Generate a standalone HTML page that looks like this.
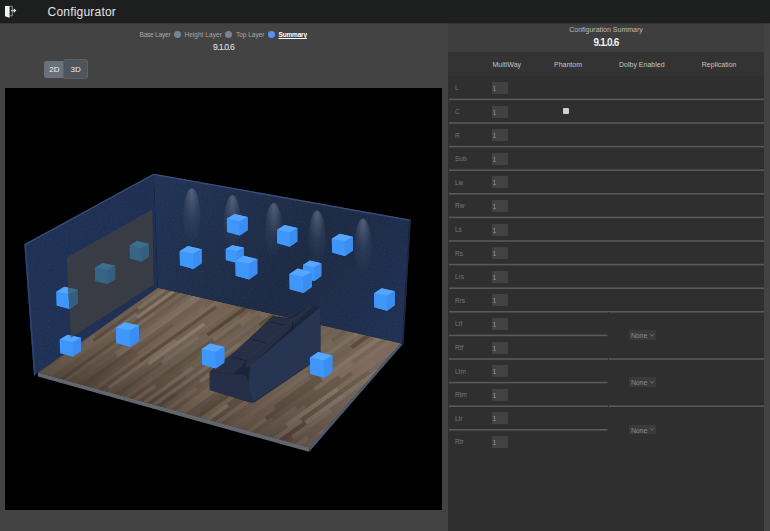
<!DOCTYPE html>
<html><head><meta charset="utf-8">
<style>
html,body{margin:0;padding:0;}
body{width:770px;height:531px;position:relative;overflow:hidden;background:#434343;font-family:"Liberation Sans",sans-serif;}
.abs{position:absolute;}
#hdr{position:absolute;left:0;top:0;width:770px;height:23px;background:#1d1f1f;box-shadow:0 0.5px 1.5px rgba(0,0,0,0.45);z-index:2;}
#title{position:absolute;z-index:3;left:47.6px;top:3.5px;font-size:12px;letter-spacing:0.2px;color:#e4e4e4;line-height:16px;}
#tabs{position:absolute;left:0;top:30.2px;width:447px;text-align:center;font-size:6.5px;letter-spacing:-0.2px;color:#a8a8a8;line-height:10px;white-space:nowrap;}
.dot{position:absolute;top:31.2px;width:6.8px;height:6.8px;border-radius:50%;background:#788390;}
.tb{position:absolute;top:30.2px;font-size:6.5px;color:#a8a8a8;line-height:10px;white-space:nowrap;}
#ver{position:absolute;left:0;top:42px;width:447px;text-align:center;font-size:8.7px;letter-spacing:-0.8px;color:#e8e8e8;line-height:10px;}
#b2d{position:absolute;left:43.7px;top:60.7px;width:21px;height:17.3px;background:#6b7178;border-radius:2px;}
#b3d{position:absolute;left:63.2px;top:59.2px;width:22.5px;height:18.2px;background:#4f555c;border:1px solid #5d6167;border-radius:3px;}
.bt{position:absolute;color:#eee;font-size:8px;line-height:8px;}
#cv{position:absolute;left:5px;top:88px;width:437px;height:422px;background:#000;}
#rp{position:absolute;left:448px;top:23px;width:316px;height:508px;background:#3e3e3e;}
#tbl{position:absolute;left:448px;top:52.3px;width:316px;height:479px;background:#2f2f2f;}
#cs{position:absolute;left:448px;top:24.6px;width:316px;text-align:center;font-size:7px;color:#bbb;line-height:10px;}
#csv{position:absolute;left:448px;top:36.5px;width:316px;text-align:center;font-size:10px;font-weight:bold;letter-spacing:-0.8px;color:#f0f0f0;line-height:12px;}
.th{position:absolute;top:60px;font-size:7px;color:#c4c4c4;line-height:10px;white-space:nowrap;}
.rl{position:absolute;left:455px;font-size:6.5px;color:#777;line-height:10px;}
.inp{position:absolute;left:492px;width:16px;height:12px;background:#424242;font-size:6.5px;color:#999;line-height:13.4px;text-indent:0.5px;}
.ln{position:absolute;left:449px;width:315px;height:1.3px;background:#575757;}
.sel{position:absolute;left:628.7px;width:27.4px;height:9.7px;background:#3a3a3a;font-size:7px;color:#8a8a8a;line-height:12px;text-indent:2.2px;letter-spacing:-0.1px;}
.sel svg{position:absolute;left:21.6px;top:3.9px;}
</style></head><body>
<div id="hdr"></div>
<svg class="abs" style="left:4px;top:5px;z-index:3" width="14" height="14" viewBox="0 0 14 14">
<polygon points="1,1 5.6,1 5.6,12.7 1,11.2" fill="#f2f2f2"/>
<polyline points="5.6,1.2 8.3,1.2 8.3,10.8 5.6,10.8" fill="none" stroke="#9a9a9a" stroke-width="0.9"/>
<rect x="7" y="4.9" width="3" height="1.4" fill="#bdbdbd"/>
<polygon points="9.8,3.4 12.4,5.6 9.8,7.9" fill="#f2f2f2"/>
</svg>
<div id="title">Configurator</div>
<div class="tb" style="left:139.5px;letter-spacing:-0.2px">Base Layer</div><span class="dot" style="left:174.3px"></span><div class="tb" style="left:184.4px;letter-spacing:0.05px">Height Layer</div><span class="dot" style="left:225.4px"></span><div class="tb" style="left:235.9px;letter-spacing:0px">Top Layer</div><span class="dot" style="left:268.2px;background:#5b8ff0"></span><div class="tb" style="left:278.6px;color:#fff;font-weight:bold;text-decoration:underline;letter-spacing:-0.2px">Summary</div>
<div id="ver">9.1.0.6</div>
<div id="b2d"></div>
<div id="b3d"></div>
<div class="bt" style="left:49.3px;top:66.1px">2D</div>
<div class="bt" style="left:70.5px;top:66.1px">3D</div>
<div id="cv"><svg width="437" height="422" viewBox="5 88 437 422" style="display:block">
<defs>
<linearGradient id="lw" gradientUnits="userSpaceOnUse" x1="25" y1="250" x2="155" y2="250"><stop offset="0" stop-color="#1f3155"/><stop offset="1" stop-color="#1e2f52"/></linearGradient>
<linearGradient id="bw" gradientUnits="userSpaceOnUse" x1="155" y1="175" x2="405" y2="345"><stop offset="0" stop-color="#213456"/><stop offset="0.55" stop-color="#1d2a44"/><stop offset="1" stop-color="#203155"/></linearGradient>
<radialGradient id="spot" cx="0.5" cy="0.22" r="0.8" fx="0.5" fy="0.06"><stop offset="0" stop-color="#a4aec0" stop-opacity="0.38"/><stop offset="0.55" stop-color="#8a96aa" stop-opacity="0.1"/><stop offset="1" stop-color="#8a96aa" stop-opacity="0"/></radialGradient>
<filter id="nz" x="0" y="0" width="100%" height="100%"><feTurbulence type="fractalNoise" baseFrequency="0.7" numOctaves="2" seed="3"/><feColorMatrix type="matrix" values="0 0 0 0 0.6  0 0 0 0 0.7  0 0 0 0 0.9  1 0 0 0 -0.45"/></filter>
<clipPath id="wc"><polygon points="24.4,244.4 153.8,173.7 410.8,219.8 403.4,344.6 400.5,343.2 157.6,287.7 37.9,372.6 34,375.7"/></clipPath>
<filter id="blr" x="-5%" y="-5%" width="110%" height="110%"><feGaussianBlur stdDeviation="0.6"/></filter>
<clipPath id="fc"><polygon points="157.6,287.7 400.5,343.2 309.5,447.5 37.9,372.6"/></clipPath>
<linearGradient id="flg" gradientUnits="userSpaceOnUse" x1="60" y1="330" x2="370" y2="360"><stop offset="0" stop-color="#000" stop-opacity="0.12"/><stop offset="0.5" stop-color="#000" stop-opacity="0"/><stop offset="1" stop-color="#fff" stop-opacity="0.08"/></linearGradient>
<linearGradient id="flg2" gradientUnits="userSpaceOnUse" x1="230" y1="300" x2="190" y2="430"><stop offset="0" stop-color="#fff" stop-opacity="0.04"/><stop offset="1" stop-color="#000" stop-opacity="0.2"/></linearGradient>
</defs>
<rect x="5" y="88" width="437" height="422" fill="#000"/>
<polygon points="37.9,372.6 309.5,447.5 308.8,451.8 37.9,376.6" fill="#62666e"/>
<polygon points="309.5,447.5 400.5,343.2 402.5,344.5 309.0,452.0" fill="#4a5a72"/>
<polygon points="157.6,287.7 400.5,343.2 309.5,447.5 37.9,372.6" fill="#6a5b4f"/>
<g clip-path="url(#fc)"><g filter="url(#blr)"><g transform="translate(37.9,372.6) rotate(-35.47)"><rect x="-33" y="-5.0" width="80" height="3.5" fill="rgb(123, 106, 87)"/><rect x="46" y="-5.0" width="76" height="3.5" fill="rgb(107, 90, 70)"/><rect x="122" y="-5.0" width="62" height="3.5" fill="rgb(130, 109, 98)"/><rect x="183" y="-5.0" width="108" height="3.5" fill="rgb(124, 106, 87)"/><rect x="291" y="-5.0" width="42" height="3.5" fill="rgb(106, 88, 72)"/><rect x="-32" y="-1.8" width="71" height="3.5" fill="rgb(113, 93, 79)"/><rect x="39" y="-1.8" width="75" height="3.5" fill="rgb(104, 90, 75)"/><rect x="114" y="-1.8" width="99" height="3.5" fill="rgb(102, 82, 66)"/><rect x="212" y="-1.8" width="61" height="3.5" fill="rgb(128, 114, 94)"/><rect x="273" y="-1.8" width="108" height="3.5" fill="rgb(122, 99, 85)"/><rect x="-5" y="1.4" width="73" height="3.5" fill="rgb(120, 106, 91)"/><rect x="68" y="1.4" width="59" height="3.5" fill="rgb(108, 91, 80)"/><rect x="126" y="1.4" width="94" height="3.5" fill="rgb(115, 97, 86)"/><rect x="219" y="1.4" width="53" height="3.5" fill="rgb(117, 99, 82)"/><rect x="272" y="1.4" width="92" height="3.5" fill="rgb(120, 104, 87)"/><rect x="-44" y="4.6" width="108" height="3.5" fill="rgb(125, 104, 92)"/><rect x="64" y="4.6" width="55" height="3.5" fill="rgb(95, 73, 64)"/><rect x="119" y="4.6" width="55" height="3.5" fill="rgb(123, 109, 90)"/><rect x="174" y="4.6" width="61" height="3.5" fill="rgb(116, 96, 83)"/><rect x="235" y="4.6" width="67" height="3.5" fill="rgb(113, 99, 80)"/><rect x="301" y="4.6" width="81" height="3.5" fill="rgb(114, 101, 85)"/><rect x="-45" y="7.8" width="54" height="3.5" fill="rgb(107, 91, 71)"/><rect x="8" y="7.8" width="107" height="3.5" fill="rgb(122, 103, 86)"/><rect x="115" y="7.8" width="108" height="3.5" fill="rgb(99, 84, 67)"/><rect x="222" y="7.8" width="98" height="3.5" fill="rgb(102, 87, 68)"/><rect x="320" y="7.8" width="56" height="3.5" fill="rgb(106, 90, 74)"/><rect x="-43" y="11.0" width="105" height="3.6" fill="rgb(110, 94, 76)"/><rect x="61" y="11.0" width="53" height="3.6" fill="rgb(112, 96, 78)"/><rect x="113" y="11.0" width="66" height="3.6" fill="rgb(136, 119, 102)"/><rect x="179" y="11.0" width="50" height="3.6" fill="rgb(88, 70, 61)"/><rect x="229" y="11.0" width="90" height="3.6" fill="rgb(114, 95, 81)"/><rect x="318" y="11.0" width="63" height="3.6" fill="rgb(114, 90, 78)"/><rect x="-16" y="14.3" width="104" height="3.6" fill="rgb(111, 94, 76)"/><rect x="87" y="14.3" width="88" height="3.6" fill="rgb(96, 77, 60)"/><rect x="175" y="14.3" width="96" height="3.6" fill="rgb(121, 102, 88)"/><rect x="271" y="14.3" width="83" height="3.6" fill="rgb(97, 83, 70)"/><rect x="-7" y="17.6" width="91" height="3.6" fill="rgb(97, 78, 66)"/><rect x="84" y="17.6" width="46" height="3.6" fill="rgb(124, 102, 90)"/><rect x="130" y="17.6" width="74" height="3.6" fill="rgb(113, 96, 82)"/><rect x="203" y="17.6" width="58" height="3.6" fill="rgb(125, 110, 95)"/><rect x="261" y="17.6" width="55" height="3.6" fill="rgb(124, 105, 91)"/><rect x="315" y="17.6" width="63" height="3.6" fill="rgb(133, 113, 98)"/><rect x="-12" y="20.9" width="104" height="3.6" fill="rgb(119, 100, 83)"/><rect x="92" y="20.9" width="75" height="3.6" fill="rgb(105, 87, 71)"/><rect x="167" y="20.9" width="107" height="3.6" fill="rgb(109, 90, 75)"/><rect x="274" y="20.9" width="69" height="3.6" fill="rgb(118, 100, 83)"/><rect x="-10" y="24.3" width="109" height="3.7" fill="rgb(104, 91, 71)"/><rect x="99" y="24.3" width="90" height="3.7" fill="rgb(112, 93, 80)"/><rect x="189" y="24.3" width="42" height="3.7" fill="rgb(116, 103, 84)"/><rect x="230" y="24.3" width="50" height="3.7" fill="rgb(117, 103, 86)"/><rect x="280" y="24.3" width="85" height="3.7" fill="rgb(102, 82, 65)"/><rect x="-31" y="27.6" width="53" height="3.7" fill="rgb(91, 75, 62)"/><rect x="21" y="27.6" width="53" height="3.7" fill="rgb(110, 91, 77)"/><rect x="74" y="27.6" width="93" height="3.7" fill="rgb(120, 105, 90)"/><rect x="166" y="27.6" width="47" height="3.7" fill="rgb(125, 109, 94)"/><rect x="213" y="27.6" width="104" height="3.7" fill="rgb(102, 85, 72)"/><rect x="316" y="27.6" width="96" height="3.7" fill="rgb(123, 103, 90)"/><rect x="-11" y="31.0" width="85" height="3.7" fill="rgb(107, 86, 75)"/><rect x="74" y="31.0" width="109" height="3.7" fill="rgb(126, 106, 93)"/><rect x="183" y="31.0" width="100" height="3.7" fill="rgb(107, 88, 75)"/><rect x="283" y="31.0" width="79" height="3.7" fill="rgb(109, 96, 76)"/><rect x="-12" y="34.4" width="53" height="3.7" fill="rgb(96, 81, 62)"/><rect x="40" y="34.4" width="51" height="3.7" fill="rgb(94, 75, 62)"/><rect x="91" y="34.4" width="75" height="3.7" fill="rgb(111, 88, 74)"/><rect x="165" y="34.4" width="77" height="3.7" fill="rgb(107, 88, 75)"/><rect x="242" y="34.4" width="80" height="3.7" fill="rgb(127, 110, 96)"/><rect x="321" y="34.4" width="104" height="3.7" fill="rgb(119, 98, 83)"/><rect x="-48" y="37.8" width="78" height="3.7" fill="rgb(131, 115, 95)"/><rect x="30" y="37.8" width="108" height="3.7" fill="rgb(101, 81, 66)"/><rect x="137" y="37.8" width="89" height="3.7" fill="rgb(106, 91, 75)"/><rect x="226" y="37.8" width="107" height="3.7" fill="rgb(118, 98, 84)"/><rect x="-11" y="41.2" width="104" height="3.8" fill="rgb(106, 87, 71)"/><rect x="92" y="41.2" width="84" height="3.8" fill="rgb(117, 95, 80)"/><rect x="175" y="41.2" width="56" height="3.8" fill="rgb(108, 88, 73)"/><rect x="231" y="41.2" width="84" height="3.8" fill="rgb(122, 107, 89)"/><rect x="315" y="41.2" width="54" height="3.8" fill="rgb(121, 103, 87)"/><rect x="-35" y="44.7" width="78" height="3.8" fill="rgb(115, 97, 81)"/><rect x="42" y="44.7" width="100" height="3.8" fill="rgb(117, 101, 81)"/><rect x="141" y="44.7" width="92" height="3.8" fill="rgb(118, 100, 88)"/><rect x="233" y="44.7" width="56" height="3.8" fill="rgb(90, 71, 53)"/><rect x="289" y="44.7" width="57" height="3.8" fill="rgb(106, 93, 75)"/><rect x="-13" y="48.2" width="49" height="3.8" fill="rgb(100, 84, 65)"/><rect x="36" y="48.2" width="55" height="3.8" fill="rgb(102, 79, 67)"/><rect x="90" y="48.2" width="94" height="3.8" fill="rgb(87, 70, 53)"/><rect x="183" y="48.2" width="45" height="3.8" fill="rgb(112, 94, 79)"/><rect x="228" y="48.2" width="51" height="3.8" fill="rgb(110, 92, 80)"/><rect x="279" y="48.2" width="110" height="3.8" fill="rgb(112, 99, 81)"/><rect x="-14" y="51.7" width="63" height="3.8" fill="rgb(107, 89, 74)"/><rect x="49" y="51.7" width="83" height="3.8" fill="rgb(129, 108, 93)"/><rect x="131" y="51.7" width="92" height="3.8" fill="rgb(110, 91, 76)"/><rect x="223" y="51.7" width="76" height="3.8" fill="rgb(135, 117, 101)"/><rect x="298" y="51.7" width="85" height="3.8" fill="rgb(111, 95, 79)"/><rect x="-1" y="55.2" width="97" height="3.9" fill="rgb(110, 92, 77)"/><rect x="95" y="55.2" width="69" height="3.9" fill="rgb(136, 119, 101)"/><rect x="164" y="55.2" width="94" height="3.9" fill="rgb(112, 90, 76)"/><rect x="257" y="55.2" width="73" height="3.9" fill="rgb(95, 79, 66)"/><rect x="-23" y="58.8" width="57" height="3.9" fill="rgb(124, 108, 92)"/><rect x="34" y="58.8" width="78" height="3.9" fill="rgb(103, 89, 71)"/><rect x="111" y="58.8" width="90" height="3.9" fill="rgb(109, 94, 80)"/><rect x="200" y="58.8" width="58" height="3.9" fill="rgb(77, 57, 44)"/><rect x="258" y="58.8" width="67" height="3.9" fill="rgb(119, 99, 83)"/><rect x="324" y="58.8" width="108" height="3.9" fill="rgb(115, 99, 82)"/><rect x="-11" y="62.3" width="46" height="3.9" fill="rgb(91, 78, 59)"/><rect x="34" y="62.3" width="74" height="3.9" fill="rgb(96, 80, 66)"/><rect x="107" y="62.3" width="45" height="3.9" fill="rgb(120, 103, 86)"/><rect x="151" y="62.3" width="61" height="3.9" fill="rgb(106, 88, 71)"/><rect x="211" y="62.3" width="91" height="3.9" fill="rgb(107, 88, 73)"/><rect x="301" y="62.3" width="93" height="3.9" fill="rgb(110, 95, 79)"/><rect x="-57" y="65.9" width="110" height="3.9" fill="rgb(116, 95, 80)"/><rect x="52" y="65.9" width="109" height="3.9" fill="rgb(106, 90, 77)"/><rect x="160" y="65.9" width="91" height="3.9" fill="rgb(80, 60, 44)"/><rect x="251" y="65.9" width="84" height="3.9" fill="rgb(115, 96, 79)"/><rect x="-28" y="69.6" width="49" height="3.9" fill="rgb(93, 74, 61)"/><rect x="20" y="69.6" width="70" height="3.9" fill="rgb(116, 97, 84)"/><rect x="90" y="69.6" width="107" height="3.9" fill="rgb(106, 92, 77)"/><rect x="196" y="69.6" width="84" height="3.9" fill="rgb(100, 81, 69)"/><rect x="280" y="69.6" width="80" height="3.9" fill="rgb(97, 75, 61)"/><rect x="-1" y="73.2" width="105" height="4.0" fill="rgb(102, 79, 65)"/><rect x="103" y="73.2" width="59" height="4.0" fill="rgb(92, 77, 59)"/><rect x="162" y="73.2" width="47" height="4.0" fill="rgb(117, 98, 83)"/><rect x="208" y="73.2" width="67" height="4.0" fill="rgb(100, 84, 70)"/><rect x="274" y="73.2" width="46" height="4.0" fill="rgb(107, 94, 77)"/><rect x="319" y="73.2" width="94" height="4.0" fill="rgb(110, 95, 77)"/><rect x="-21" y="76.9" width="110" height="4.0" fill="rgb(119, 103, 88)"/><rect x="88" y="76.9" width="105" height="4.0" fill="rgb(96, 83, 64)"/><rect x="193" y="76.9" width="46" height="4.0" fill="rgb(114, 95, 81)"/><rect x="239" y="76.9" width="61" height="4.0" fill="rgb(108, 92, 74)"/><rect x="300" y="76.9" width="62" height="4.0" fill="rgb(106, 87, 70)"/><rect x="-51" y="80.6" width="66" height="4.0" fill="rgb(105, 90, 74)"/><rect x="14" y="80.6" width="105" height="4.0" fill="rgb(100, 82, 65)"/><rect x="118" y="80.6" width="97" height="4.0" fill="rgb(105, 90, 74)"/><rect x="214" y="80.6" width="58" height="4.0" fill="rgb(117, 99, 83)"/><rect x="272" y="80.6" width="68" height="4.0" fill="rgb(103, 87, 70)"/><rect x="-10" y="84.3" width="80" height="4.0" fill="rgb(111, 97, 82)"/><rect x="70" y="84.3" width="60" height="4.0" fill="rgb(122, 105, 91)"/><rect x="129" y="84.3" width="86" height="4.0" fill="rgb(112, 90, 77)"/><rect x="215" y="84.3" width="96" height="4.0" fill="rgb(114, 97, 77)"/><rect x="310" y="84.3" width="85" height="4.0" fill="rgb(108, 94, 78)"/><rect x="-45" y="88.0" width="56" height="4.1" fill="rgb(111, 91, 75)"/><rect x="10" y="88.0" width="108" height="4.1" fill="rgb(96, 76, 62)"/><rect x="118" y="88.0" width="91" height="4.1" fill="rgb(101, 86, 70)"/><rect x="208" y="88.0" width="100" height="4.1" fill="rgb(86, 68, 54)"/><rect x="308" y="88.0" width="108" height="4.1" fill="rgb(101, 83, 66)"/><rect x="-35" y="91.8" width="51" height="4.1" fill="rgb(99, 82, 64)"/><rect x="15" y="91.8" width="52" height="4.1" fill="rgb(110, 96, 75)"/><rect x="67" y="91.8" width="62" height="4.1" fill="rgb(117, 103, 88)"/><rect x="129" y="91.8" width="53" height="4.1" fill="rgb(120, 104, 83)"/><rect x="181" y="91.8" width="48" height="4.1" fill="rgb(111, 93, 78)"/><rect x="229" y="91.8" width="91" height="4.1" fill="rgb(100, 82, 67)"/><rect x="319" y="91.8" width="94" height="4.1" fill="rgb(102, 86, 72)"/><rect x="-31" y="95.6" width="59" height="4.1" fill="rgb(126, 110, 96)"/><rect x="27" y="95.6" width="74" height="4.1" fill="rgb(90, 71, 62)"/><rect x="101" y="95.6" width="97" height="4.1" fill="rgb(98, 78, 68)"/><rect x="197" y="95.6" width="87" height="4.1" fill="rgb(115, 96, 83)"/><rect x="283" y="95.6" width="67" height="4.1" fill="rgb(114, 93, 78)"/><rect x="-41" y="99.4" width="59" height="4.1" fill="rgb(93, 72, 59)"/><rect x="17" y="99.4" width="110" height="4.1" fill="rgb(104, 90, 70)"/><rect x="127" y="99.4" width="98" height="4.1" fill="rgb(124, 106, 85)"/><rect x="224" y="99.4" width="59" height="4.1" fill="rgb(107, 89, 76)"/><rect x="283" y="99.4" width="82" height="4.1" fill="rgb(105, 84, 72)"/><rect x="-35" y="103.2" width="105" height="4.2" fill="rgb(123, 108, 92)"/><rect x="69" y="103.2" width="52" height="4.2" fill="rgb(121, 100, 84)"/><rect x="120" y="103.2" width="46" height="4.2" fill="rgb(105, 84, 71)"/><rect x="166" y="103.2" width="48" height="4.2" fill="rgb(119, 102, 89)"/><rect x="213" y="103.2" width="99" height="4.2" fill="rgb(106, 90, 72)"/><rect x="311" y="103.2" width="80" height="4.2" fill="rgb(106, 85, 76)"/><rect x="-12" y="107.0" width="55" height="4.2" fill="rgb(100, 83, 66)"/><rect x="42" y="107.0" width="64" height="4.2" fill="rgb(101, 84, 67)"/><rect x="106" y="107.0" width="54" height="4.2" fill="rgb(109, 89, 75)"/><rect x="160" y="107.0" width="64" height="4.2" fill="rgb(99, 77, 63)"/><rect x="223" y="107.0" width="47" height="4.2" fill="rgb(98, 81, 69)"/><rect x="270" y="107.0" width="82" height="4.2" fill="rgb(89, 72, 57)"/><rect x="-53" y="110.9" width="69" height="4.2" fill="rgb(129, 113, 97)"/><rect x="16" y="110.9" width="94" height="4.2" fill="rgb(120, 100, 84)"/><rect x="110" y="110.9" width="69" height="4.2" fill="rgb(120, 104, 87)"/><rect x="178" y="110.9" width="87" height="4.2" fill="rgb(109, 88, 74)"/><rect x="265" y="110.9" width="64" height="4.2" fill="rgb(103, 86, 73)"/><rect x="329" y="110.9" width="98" height="4.2" fill="rgb(104, 83, 72)"/><rect x="-6" y="114.8" width="79" height="4.2" fill="rgb(97, 82, 69)"/><rect x="73" y="114.8" width="77" height="4.2" fill="rgb(119, 102, 82)"/><rect x="149" y="114.8" width="107" height="4.2" fill="rgb(99, 82, 69)"/><rect x="255" y="114.8" width="89" height="4.2" fill="rgb(101, 86, 68)"/><rect x="-32" y="118.8" width="49" height="4.3" fill="rgb(115, 95, 80)"/><rect x="16" y="118.8" width="80" height="4.3" fill="rgb(105, 90, 76)"/><rect x="96" y="118.8" width="98" height="4.3" fill="rgb(104, 83, 72)"/><rect x="193" y="118.8" width="57" height="4.3" fill="rgb(104, 88, 69)"/><rect x="250" y="118.8" width="79" height="4.3" fill="rgb(108, 95, 79)"/><rect x="328" y="118.8" width="87" height="4.3" fill="rgb(107, 91, 77)"/><rect x="-37" y="122.7" width="82" height="4.3" fill="rgb(106, 89, 72)"/><rect x="44" y="122.7" width="68" height="4.3" fill="rgb(105, 85, 72)"/><rect x="111" y="122.7" width="59" height="4.3" fill="rgb(99, 77, 66)"/><rect x="170" y="122.7" width="51" height="4.3" fill="rgb(105, 85, 70)"/><rect x="220" y="122.7" width="69" height="4.3" fill="rgb(96, 78, 62)"/><rect x="289" y="122.7" width="110" height="4.3" fill="rgb(97, 79, 62)"/><rect x="-34" y="126.7" width="80" height="4.3" fill="rgb(118, 100, 87)"/><rect x="46" y="126.7" width="63" height="4.3" fill="rgb(96, 82, 69)"/><rect x="108" y="126.7" width="92" height="4.3" fill="rgb(90, 74, 56)"/><rect x="199" y="126.7" width="49" height="4.3" fill="rgb(96, 78, 63)"/><rect x="248" y="126.7" width="44" height="4.3" fill="rgb(100, 83, 68)"/><rect x="292" y="126.7" width="57" height="4.3" fill="rgb(91, 78, 64)"/><rect x="-20" y="130.7" width="101" height="4.3" fill="rgb(87, 72, 57)"/><rect x="81" y="130.7" width="104" height="4.3" fill="rgb(114, 100, 81)"/><rect x="184" y="130.7" width="78" height="4.3" fill="rgb(105, 88, 73)"/><rect x="261" y="130.7" width="45" height="4.3" fill="rgb(109, 90, 73)"/><rect x="306" y="130.7" width="65" height="4.3" fill="rgb(101, 88, 69)"/><rect x="-30" y="134.7" width="106" height="4.4" fill="rgb(107, 86, 70)"/><rect x="75" y="134.7" width="61" height="4.4" fill="rgb(126, 112, 93)"/><rect x="136" y="134.7" width="74" height="4.4" fill="rgb(93, 79, 65)"/><rect x="209" y="134.7" width="55" height="4.4" fill="rgb(104, 81, 66)"/><rect x="263" y="134.7" width="91" height="4.4" fill="rgb(100, 85, 70)"/><rect x="-17" y="138.8" width="50" height="4.4" fill="rgb(97, 77, 63)"/><rect x="32" y="138.8" width="62" height="4.4" fill="rgb(83, 61, 47)"/><rect x="94" y="138.8" width="57" height="4.4" fill="rgb(95, 79, 66)"/><rect x="150" y="138.8" width="82" height="4.4" fill="rgb(88, 70, 59)"/><rect x="232" y="138.8" width="87" height="4.4" fill="rgb(101, 88, 70)"/><rect x="318" y="138.8" width="77" height="4.4" fill="rgb(122, 102, 89)"/><rect x="-43" y="142.9" width="58" height="4.4" fill="rgb(106, 91, 73)"/><rect x="15" y="142.9" width="60" height="4.4" fill="rgb(102, 82, 71)"/><rect x="74" y="142.9" width="110" height="4.4" fill="rgb(120, 100, 87)"/><rect x="183" y="142.9" width="75" height="4.4" fill="rgb(107, 91, 76)"/><rect x="258" y="142.9" width="66" height="4.4" fill="rgb(95, 77, 65)"/><rect x="323" y="142.9" width="88" height="4.4" fill="rgb(90, 74, 55)"/><rect x="-13" y="147.0" width="52" height="4.4" fill="rgb(99, 83, 68)"/><rect x="38" y="147.0" width="96" height="4.4" fill="rgb(99, 83, 66)"/><rect x="134" y="147.0" width="81" height="4.4" fill="rgb(103, 86, 70)"/><rect x="214" y="147.0" width="102" height="4.4" fill="rgb(104, 86, 70)"/><rect x="315" y="147.0" width="75" height="4.4" fill="rgb(93, 78, 60)"/><rect x="-6" y="151.1" width="80" height="4.5" fill="rgb(111, 94, 76)"/><rect x="74" y="151.1" width="51" height="4.5" fill="rgb(103, 87, 72)"/><rect x="124" y="151.1" width="59" height="4.5" fill="rgb(109, 88, 78)"/><rect x="183" y="151.1" width="53" height="4.5" fill="rgb(107, 90, 74)"/><rect x="235" y="151.1" width="45" height="4.5" fill="rgb(112, 94, 77)"/><rect x="279" y="151.1" width="108" height="4.5" fill="rgb(120, 104, 83)"/><rect x="-33" y="155.3" width="93" height="4.5" fill="rgb(106, 90, 78)"/><rect x="59" y="155.3" width="50" height="4.5" fill="rgb(98, 77, 63)"/><rect x="109" y="155.3" width="110" height="4.5" fill="rgb(113, 95, 77)"/><rect x="219" y="155.3" width="58" height="4.5" fill="rgb(97, 82, 64)"/><rect x="277" y="155.3" width="64" height="4.5" fill="rgb(106, 86, 67)"/><rect x="-36" y="159.5" width="86" height="4.5" fill="rgb(116, 99, 82)"/><rect x="50" y="159.5" width="103" height="4.5" fill="rgb(109, 91, 78)"/><rect x="152" y="159.5" width="67" height="4.5" fill="rgb(106, 87, 74)"/><rect x="218" y="159.5" width="52" height="4.5" fill="rgb(96, 78, 65)"/><rect x="270" y="159.5" width="62" height="4.5" fill="rgb(73, 55, 38)"/><rect x="-37" y="163.7" width="46" height="4.5" fill="rgb(118, 98, 82)"/><rect x="8" y="163.7" width="42" height="4.5" fill="rgb(108, 94, 77)"/><rect x="49" y="163.7" width="59" height="4.5" fill="rgb(112, 93, 83)"/><rect x="108" y="163.7" width="66" height="4.5" fill="rgb(109, 86, 73)"/><rect x="173" y="163.7" width="67" height="4.5" fill="rgb(85, 71, 54)"/><rect x="240" y="163.7" width="94" height="4.5" fill="rgb(101, 82, 66)"/><rect x="-51" y="167.9" width="82" height="4.6" fill="rgb(102, 86, 71)"/><rect x="31" y="167.9" width="79" height="4.6" fill="rgb(115, 100, 84)"/><rect x="109" y="167.9" width="51" height="4.6" fill="rgb(117, 99, 86)"/><rect x="159" y="167.9" width="69" height="4.6" fill="rgb(86, 68, 55)"/><rect x="227" y="167.9" width="56" height="4.6" fill="rgb(117, 99, 87)"/><rect x="283" y="167.9" width="80" height="4.6" fill="rgb(115, 99, 85)"/><rect x="-47" y="172.2" width="89" height="4.6" fill="rgb(77, 60, 46)"/><rect x="41" y="172.2" width="57" height="4.6" fill="rgb(101, 83, 66)"/><rect x="98" y="172.2" width="67" height="4.6" fill="rgb(100, 83, 67)"/><rect x="164" y="172.2" width="52" height="4.6" fill="rgb(93, 77, 60)"/><rect x="216" y="172.2" width="47" height="4.6" fill="rgb(111, 94, 77)"/><rect x="262" y="172.2" width="81" height="4.6" fill="rgb(102, 80, 67)"/><rect x="-38" y="176.5" width="45" height="4.6" fill="rgb(91, 70, 59)"/><rect x="6" y="176.5" width="82" height="4.6" fill="rgb(94, 74, 61)"/><rect x="87" y="176.5" width="103" height="4.6" fill="rgb(107, 87, 75)"/><rect x="190" y="176.5" width="54" height="4.6" fill="rgb(92, 70, 57)"/><rect x="243" y="176.5" width="106" height="4.6" fill="rgb(109, 91, 75)"/><rect x="-35" y="180.8" width="70" height="4.7" fill="rgb(103, 82, 71)"/><rect x="34" y="180.8" width="43" height="4.7" fill="rgb(123, 108, 91)"/><rect x="76" y="180.8" width="66" height="4.7" fill="rgb(109, 91, 79)"/><rect x="142" y="180.8" width="57" height="4.7" fill="rgb(101, 86, 70)"/><rect x="198" y="180.8" width="57" height="4.7" fill="rgb(89, 71, 56)"/><rect x="255" y="180.8" width="99" height="4.7" fill="rgb(108, 86, 71)"/><rect x="-7" y="185.2" width="62" height="4.7" fill="rgb(102, 85, 70)"/><rect x="55" y="185.2" width="52" height="4.7" fill="rgb(88, 69, 55)"/><rect x="106" y="185.2" width="66" height="4.7" fill="rgb(100, 81, 66)"/><rect x="172" y="185.2" width="63" height="4.7" fill="rgb(121, 105, 87)"/><rect x="235" y="185.2" width="45" height="4.7" fill="rgb(110, 89, 76)"/><rect x="279" y="185.2" width="95" height="4.7" fill="rgb(106, 87, 76)"/><rect x="-8" y="189.5" width="44" height="4.7" fill="rgb(106, 85, 72)"/><rect x="36" y="189.5" width="58" height="4.7" fill="rgb(119, 99, 83)"/><rect x="94" y="189.5" width="94" height="4.7" fill="rgb(116, 98, 84)"/><rect x="187" y="189.5" width="84" height="4.7" fill="rgb(89, 70, 52)"/><rect x="270" y="189.5" width="67" height="4.7" fill="rgb(98, 79, 68)"/><rect x="-4" y="194.0" width="108" height="4.7" fill="rgb(95, 80, 64)"/><rect x="104" y="194.0" width="85" height="4.7" fill="rgb(86, 62, 52)"/><rect x="189" y="194.0" width="49" height="4.7" fill="rgb(117, 101, 88)"/><rect x="237" y="194.0" width="110" height="4.7" fill="rgb(109, 94, 78)"/><rect x="-38" y="198.4" width="62" height="4.8" fill="rgb(113, 95, 76)"/><rect x="24" y="198.4" width="68" height="4.8" fill="rgb(93, 71, 58)"/><rect x="91" y="198.4" width="79" height="4.8" fill="rgb(93, 71, 57)"/><rect x="170" y="198.4" width="48" height="4.8" fill="rgb(112, 92, 77)"/><rect x="217" y="198.4" width="42" height="4.8" fill="rgb(101, 80, 68)"/><rect x="259" y="198.4" width="60" height="4.8" fill="rgb(105, 86, 70)"/><rect x="318" y="198.4" width="45" height="4.8" fill="rgb(119, 98, 81)"/><rect x="-49" y="202.9" width="74" height="4.8" fill="rgb(113, 93, 78)"/><rect x="25" y="202.9" width="97" height="4.8" fill="rgb(103, 83, 71)"/><rect x="121" y="202.9" width="86" height="4.8" fill="rgb(100, 81, 67)"/><rect x="207" y="202.9" width="72" height="4.8" fill="rgb(99, 81, 63)"/><rect x="278" y="202.9" width="42" height="4.8" fill="rgb(104, 88, 75)"/><rect x="320" y="202.9" width="62" height="4.8" fill="rgb(109, 88, 74)"/><rect x="-2" y="207.3" width="41" height="4.8" fill="rgb(85, 66, 50)"/><rect x="38" y="207.3" width="97" height="4.8" fill="rgb(102, 84, 70)"/><rect x="135" y="207.3" width="48" height="4.8" fill="rgb(116, 95, 84)"/><rect x="182" y="207.3" width="42" height="4.8" fill="rgb(101, 80, 67)"/><rect x="223" y="207.3" width="66" height="4.8" fill="rgb(91, 75, 59)"/><rect x="289" y="207.3" width="60" height="4.8" fill="rgb(89, 67, 52)"/><rect x="-40" y="211.9" width="92" height="4.8" fill="rgb(108, 91, 73)"/><rect x="52" y="211.9" width="48" height="4.8" fill="rgb(119, 103, 87)"/><rect x="99" y="211.9" width="41" height="4.8" fill="rgb(91, 74, 62)"/><rect x="140" y="211.9" width="55" height="4.8" fill="rgb(106, 84, 72)"/><rect x="194" y="211.9" width="48" height="4.8" fill="rgb(118, 96, 81)"/><rect x="242" y="211.9" width="90" height="4.8" fill="rgb(101, 83, 71)"/><rect x="-3" y="216.4" width="63" height="4.9" fill="rgb(110, 87, 75)"/><rect x="59" y="216.4" width="67" height="4.9" fill="rgb(114, 93, 80)"/><rect x="126" y="216.4" width="103" height="4.9" fill="rgb(113, 96, 77)"/><rect x="228" y="216.4" width="99" height="4.9" fill="rgb(92, 72, 59)"/><rect x="327" y="216.4" width="70" height="4.9" fill="rgb(98, 79, 64)"/><rect x="-58" y="221.0" width="84" height="4.9" fill="rgb(108, 91, 76)"/><rect x="26" y="221.0" width="106" height="4.9" fill="rgb(113, 94, 76)"/><rect x="131" y="221.0" width="92" height="4.9" fill="rgb(116, 95, 82)"/><rect x="223" y="221.0" width="49" height="4.9" fill="rgb(114, 100, 84)"/><rect x="271" y="221.0" width="106" height="4.9" fill="rgb(104, 86, 69)"/></g></g></g>
<polygon points="157.6,287.7 400.5,343.2 309.5,447.5 37.9,372.6" fill="url(#flg)"/>
<polygon points="157.6,287.7 400.5,343.2 309.5,447.5 37.9,372.6" fill="url(#flg2)"/>
<polygon points="153.8,173.7 410.8,219.8 403.4,344.6 400.5,343.2 157.6,287.7" fill="url(#bw)"/>
<polyline points="153.8,174.3 410.8,220.4" stroke="#384e78" stroke-width="1.3" fill="none"/>
<polyline points="409.8,220.3 402.6,344.4" stroke="#1b2438" stroke-width="1.6" fill="none"/>
<polygon points="24.4,244.4 153.8,173.7 157.6,287.7 37.9,372.6 34.0,375.7" fill="url(#lw)"/>
<polyline points="24.4,244.9 153.8,174.3" stroke="#384e78" stroke-width="1.3" fill="none"/>
<polyline points="25.2,245.2 34.8,375.4" stroke="#2c4270" stroke-width="1.6" fill="none"/>
<g clip-path="url(#wc)" opacity="0.13"><rect x="20" y="170" width="395" height="210" filter="url(#nz)"/></g>
<ellipse cx="191.8" cy="216.2" rx="8.5" ry="28" fill="url(#spot)"/>
<ellipse cx="232.4" cy="223" rx="8.5" ry="28" fill="url(#spot)"/>
<ellipse cx="273.8" cy="230.9" rx="8.5" ry="28" fill="url(#spot)"/>
<ellipse cx="317.1" cy="238.5" rx="8.5" ry="28" fill="url(#spot)"/>
<ellipse cx="363" cy="246.6" rx="8.5" ry="28" fill="url(#spot)"/>
<g opacity="1.0"><polygon points="56.4,291.7 64.3,286.7 77.7,289.7 77.7,303.6 69.8,309.1 56.7,305.6" fill="#3f96fb"/><polygon points="56.4,291.7 64.3,286.7 77.7,289.7 69.4,294.2" fill="#55a6ff"/><polygon points="56.4,291.7 69.4,294.2 69.8,309.1 56.7,305.6" fill="#3f96fb"/><polygon points="69.4,294.2 77.7,289.7 77.7,303.6 69.8,309.1" fill="#3a8ef2"/></g>
<g opacity="1.0"><polygon points="59.8,339.6 67.7,334.7 80.9,337.7 80.9,351.2 73.0,356.5 60.1,353.1" fill="#3f96fb"/><polygon points="59.8,339.6 67.7,334.7 80.9,337.7 72.7,342.0" fill="#55a6ff"/><polygon points="59.8,339.6 72.7,342.0 73.0,356.5 60.1,353.1" fill="#3f96fb"/><polygon points="72.7,342.0 80.9,337.7 80.9,351.2 73.0,356.5" fill="#3a8ef2"/></g>
<polygon points="66.6,257.5 152.4,209.5 153.6,284.8 70.9,337.6" fill="#3c3e44" fill-opacity="0.9"/>
<g opacity="1.0"><polygon points="94.9,267.7 102.5,263.0 115.2,265.8 115.2,278.9 107.6,284.0 95.2,280.7" fill="#386585"/><polygon points="94.9,267.7 102.5,263.0 115.2,265.8 107.3,270.1" fill="#3f6d8c"/><polygon points="94.9,267.7 107.3,270.1 107.6,284.0 95.2,280.7" fill="#386585"/><polygon points="107.3,270.1 115.2,265.8 115.2,278.9 107.6,284.0" fill="#345f7e"/></g>
<g opacity="1.0"><polygon points="129.7,245.6 136.9,241.0 149.0,243.8 149.0,256.6 141.8,261.6 130.0,258.4" fill="#386585"/><polygon points="129.7,245.6 136.9,241.0 149.0,243.8 141.5,247.9" fill="#3f6d8c"/><polygon points="129.7,245.6 141.5,247.9 141.8,261.6 130.0,258.4" fill="#386585"/><polygon points="141.5,247.9 149.0,243.8 149.0,256.6 141.8,261.6" fill="#345f7e"/></g>
<clipPath id="scl"><polygon points="66.6,257.5 152.4,209.5 153.6,284.8 70.9,337.6"/></clipPath>
<g clip-path="url(#scl)"><g opacity="1.0"><polygon points="56.4,291.7 64.3,286.7 77.7,289.7 77.7,303.6 69.8,309.1 56.7,305.6" fill="#386585"/><polygon points="56.4,291.7 64.3,286.7 77.7,289.7 69.4,294.2" fill="#3f6d8c"/><polygon points="56.4,291.7 69.4,294.2 69.8,309.1 56.7,305.6" fill="#386585"/><polygon points="69.4,294.2 77.7,289.7 77.7,303.6 69.8,309.1" fill="#345f7e"/></g><g opacity="1.0"><polygon points="59.8,339.6 67.7,334.7 80.9,337.7 80.9,351.2 73.0,356.5 60.1,353.1" fill="#386585"/><polygon points="59.8,339.6 67.7,334.7 80.9,337.7 72.7,342.0" fill="#3f6d8c"/><polygon points="59.8,339.6 72.7,342.0 73.0,356.5 60.1,353.1" fill="#386585"/><polygon points="72.7,342.0 80.9,337.7 80.9,351.2 73.0,356.5" fill="#345f7e"/></g></g>
<polygon points="209.8,371.9 214.0,368.0 236.0,351.0 272.9,316.1 290.0,318.0 309.8,305.5 315.0,305.5 320.4,307.5 320.4,357.8 254.0,402.5 250.0,402.5 209.8,390.0" fill="#1c253a"/>
<polygon points="211.0,371.0 236.0,351.0 272.9,316.6 289.0,319.0 300.0,314.0 247.9,358.2 240.0,368.0 232.0,374.0" fill="#262f46"/>
<polyline points="232.0,357.0 247.0,361.0" stroke="#181f2e" stroke-width="0.9" fill="none"/>
<polyline points="252.0,339.0 266.0,343.0" stroke="#181f2e" stroke-width="0.9" fill="none"/>
<polyline points="271.0,322.0 284.0,325.0" stroke="#181f2e" stroke-width="0.9" fill="none"/>
<polygon points="247.9,358.2 309.8,305.5 313.5,306.3 250.3,366.5 245.0,368.0" fill="#242e45"/>
<polyline points="247.9,358.6 309.8,305.9" stroke="#333846" stroke-width="0.9" fill="none"/>
<polyline points="292.7,321.3 292.0,331.0" stroke="#151b28" stroke-width="0.8" fill="none"/>
<polygon points="250.3,366.5 320.4,307.5 320.4,357.8 252.5,402.3 248.5,386.0" fill="#283552"/>
<polyline points="250.6,366.3 320.4,307.6" stroke="#2b3650" stroke-width="1" fill="none"/>
<polygon points="209.8,371.9 246.6,376.3 248.8,386.0 252.0,402.3 209.8,390.0" fill="#252f47"/>
<polyline points="210.5,372.2 246.6,376.6" stroke="#2a3143" stroke-width="1.1" fill="none"/>
<g opacity="1.0"><polygon points="116.0,327.8 124.6,322.3 139.0,325.6 139.0,340.8 130.4,346.8 116.3,342.9" fill="#3f96fb"/><polygon points="116.0,327.8 124.6,322.3 139.0,325.6 130.0,330.5" fill="#55a6ff"/><polygon points="116.0,327.8 130.0,330.5 130.4,346.8 116.3,342.9" fill="#3f96fb"/><polygon points="130.0,330.5 139.0,325.6 139.0,340.8 130.4,346.8" fill="#3a8ef2"/></g>
<g opacity="1.0"><polygon points="179.7,251.2 187.9,246.1 201.7,249.2 201.7,263.3 193.5,268.9 180.0,265.3" fill="#3f96fb"/><polygon points="179.7,251.2 187.9,246.1 201.7,249.2 193.1,253.8" fill="#55a6ff"/><polygon points="179.7,251.2 193.1,253.8 193.5,268.9 180.0,265.3" fill="#3f96fb"/><polygon points="193.1,253.8 201.7,249.2 201.7,263.3 193.5,268.9" fill="#3a8ef2"/></g>
<g opacity="1.0"><polygon points="226.8,218.8 234.6,214.0 247.6,216.9 247.6,230.2 239.8,235.4 227.1,232.0" fill="#3f96fb"/><polygon points="226.8,218.8 234.6,214.0 247.6,216.9 239.5,221.2" fill="#55a6ff"/><polygon points="226.8,218.8 239.5,221.2 239.8,235.4 227.1,232.0" fill="#3f96fb"/><polygon points="239.5,221.2 247.6,216.9 247.6,230.2 239.8,235.4" fill="#3a8ef2"/></g>
<g opacity="1.0"><polygon points="225.7,249.1 232.4,245.2 243.7,247.6 243.7,258.6 237.0,262.9 225.9,260.1" fill="#3f96fb"/><polygon points="225.7,249.1 232.4,245.2 243.7,247.6 236.7,251.2" fill="#55a6ff"/><polygon points="225.7,249.1 236.7,251.2 237.0,262.9 225.9,260.1" fill="#3f96fb"/><polygon points="236.7,251.2 243.7,247.6 243.7,258.6 237.0,262.9" fill="#3a8ef2"/></g>
<g opacity="1.0"><polygon points="235.4,261.1 243.6,255.8 257.3,259.0 257.3,273.7 249.1,279.5 235.7,275.8" fill="#3f96fb"/><polygon points="235.4,261.1 243.6,255.8 257.3,259.0 248.7,263.8" fill="#55a6ff"/><polygon points="235.4,261.1 248.7,263.8 249.1,279.5 235.7,275.8" fill="#3f96fb"/><polygon points="248.7,263.8 257.3,259.0 257.3,273.7 249.1,279.5" fill="#3a8ef2"/></g>
<g opacity="1.0"><polygon points="277.0,229.9 284.6,225.1 297.3,228.0 297.3,241.4 289.7,246.7 277.3,243.3" fill="#3f96fb"/><polygon points="277.0,229.9 284.6,225.1 297.3,228.0 289.4,232.4" fill="#55a6ff"/><polygon points="277.0,229.9 289.4,232.4 289.7,246.7 277.3,243.3" fill="#3f96fb"/><polygon points="289.4,232.4 297.3,228.0 297.3,241.4 289.7,246.7" fill="#3a8ef2"/></g>
<g opacity="1.0"><polygon points="331.8,238.8 339.7,233.8 352.9,236.8 352.9,250.6 345.0,256.1 332.1,252.6" fill="#3f96fb"/><polygon points="331.8,238.8 339.7,233.8 352.9,236.8 344.7,241.3" fill="#55a6ff"/><polygon points="331.8,238.8 344.7,241.3 345.0,256.1 332.1,252.6" fill="#3f96fb"/><polygon points="344.7,241.3 352.9,236.8 352.9,250.6 345.0,256.1" fill="#3a8ef2"/></g>
<g opacity="1.0"><polygon points="303.0,265.1 309.8,260.5 321.3,263.3 321.3,276.1 314.5,281.1 303.2,277.9" fill="#3f96fb"/><polygon points="303.0,265.1 309.8,260.5 321.3,263.3 314.1,267.4" fill="#55a6ff"/><polygon points="303.0,265.1 314.1,267.4 314.5,281.1 303.2,277.9" fill="#3f96fb"/><polygon points="314.1,267.4 321.3,263.3 321.3,276.1 314.5,281.1" fill="#3a8ef2"/></g>
<g opacity="1.0"><polygon points="289.4,274.0 297.7,268.6 311.8,271.9 311.8,287.0 303.5,293.0 289.7,289.2" fill="#3f96fb"/><polygon points="289.4,274.0 297.7,268.6 311.8,271.9 303.0,276.8" fill="#55a6ff"/><polygon points="289.4,274.0 303.0,276.8 303.5,293.0 289.7,289.2" fill="#3f96fb"/><polygon points="303.0,276.8 311.8,271.9 311.8,287.0 303.5,293.0" fill="#3a8ef2"/></g>
<g opacity="1.0"><polygon points="374.0,293.2 381.7,288.2 394.7,291.2 394.7,305.2 387.0,310.7 374.3,307.2" fill="#3f96fb"/><polygon points="374.0,293.2 381.7,288.2 394.7,291.2 386.6,295.8" fill="#55a6ff"/><polygon points="374.0,293.2 386.6,295.8 387.0,310.7 374.3,307.2" fill="#3f96fb"/><polygon points="386.6,295.8 394.7,291.2 394.7,305.2 387.0,310.7" fill="#3a8ef2"/></g>
<g opacity="1.0"><polygon points="201.8,349.1 210.2,343.6 224.3,347.0 224.3,362.4 215.9,368.5 202.1,364.6" fill="#3f96fb"/><polygon points="201.8,349.1 210.2,343.6 224.3,347.0 215.5,352.0" fill="#55a6ff"/><polygon points="201.8,349.1 215.5,352.0 215.9,368.5 202.1,364.6" fill="#3f96fb"/><polygon points="215.5,352.0 224.3,347.0 224.3,362.4 215.9,368.5" fill="#3a8ef2"/></g>
<g opacity="1.0"><polygon points="309.9,357.7 318.2,352.0 332.3,355.5 332.3,371.5 324.0,377.8 310.2,373.7" fill="#3f96fb"/><polygon points="309.9,357.7 318.2,352.0 332.3,355.5 323.5,360.7" fill="#55a6ff"/><polygon points="309.9,357.7 323.5,360.7 324.0,377.8 310.2,373.7" fill="#3f96fb"/><polygon points="323.5,360.7 332.3,355.5 332.3,371.5 324.0,377.8" fill="#3a8ef2"/></g>
</svg></div>
<div id="rp"></div>
<div id="tbl"></div>
<div class="abs" style="left:448px;top:52.3px;width:316px;height:23.5px;background:#333333"></div>
<div id="cs">Configuration Summary</div>
<div id="csv">9.1.0.6</div>
<div class="th" style="left:492.5px">MultiWay</div>
<div class="th" style="left:554px">Phantom</div>
<div class="th" style="left:619px">Dolby Enabled</div>
<div class="th" style="left:701.8px">Replication</div>
<div class="rl" style="top:83.3px">L</div>
<div class="inp" style="top:82.0px">1</div>
<div class="rl" style="top:106.9px">C</div>
<div class="inp" style="top:105.6px">1</div>
<div class="rl" style="top:130.5px">R</div>
<div class="inp" style="top:129.2px">1</div>
<div class="rl" style="top:154.1px">Sub</div>
<div class="inp" style="top:152.8px">1</div>
<div class="rl" style="top:177.7px">Lw</div>
<div class="inp" style="top:176.4px">1</div>
<div class="rl" style="top:201.3px">Rw</div>
<div class="inp" style="top:200.0px">1</div>
<div class="rl" style="top:224.9px">Ls</div>
<div class="inp" style="top:223.6px">1</div>
<div class="rl" style="top:248.5px">Rs</div>
<div class="inp" style="top:247.2px">1</div>
<div class="rl" style="top:272.1px">Lrs</div>
<div class="inp" style="top:270.8px">1</div>
<div class="rl" style="top:295.7px">Rrs</div>
<div class="inp" style="top:294.4px">1</div>
<div class="rl" style="top:319.3px">Ltf</div>
<div class="inp" style="top:318.0px">1</div>
<div class="rl" style="top:342.9px">Rtf</div>
<div class="inp" style="top:341.6px">1</div>
<div class="rl" style="top:366.5px">Ltm</div>
<div class="inp" style="top:365.2px">1</div>
<div class="rl" style="top:390.1px">Rtm</div>
<div class="inp" style="top:388.8px">1</div>
<div class="rl" style="top:413.7px">Ltr</div>
<div class="inp" style="top:412.4px">1</div>
<div class="rl" style="top:437.3px">Rtr</div>
<div class="inp" style="top:436.0px">1</div>
<svg class="abs" style="left:449px;top:0" width="315" height="531"><rect x="0" y="98.60" width="315" height="1.6" fill="#595959"/><rect x="0" y="122.20" width="315" height="1.6" fill="#595959"/><rect x="0" y="145.80" width="315" height="1.6" fill="#595959"/><rect x="0" y="169.40" width="315" height="1.6" fill="#595959"/><rect x="0" y="193.00" width="315" height="1.6" fill="#595959"/><rect x="0" y="216.60" width="315" height="1.6" fill="#595959"/><rect x="0" y="240.20" width="315" height="1.6" fill="#595959"/><rect x="0" y="263.80" width="315" height="1.6" fill="#595959"/><rect x="0" y="287.40" width="315" height="1.6" fill="#595959"/><rect x="0" y="311.00" width="315" height="1.6" fill="#595959"/><rect x="0" y="334.60" width="158.5" height="1.6" fill="#595959"/><rect x="0" y="358.20" width="315" height="1.6" fill="#595959"/><rect x="0" y="381.80" width="158.5" height="1.6" fill="#595959"/><rect x="0" y="405.40" width="315" height="1.6" fill="#595959"/><rect x="0" y="429.00" width="158.5" height="1.6" fill="#595959"/></svg>
<div class="abs" style="left:563px;top:108px;width:6px;height:6px;background:#cfcfcf;border-radius:1px"></div>
<div class="abs" style="left:607.5px;top:312px;width:1.5px;height:141px;background:#2f2f2f"></div>
<div class="sel" style="top:330.2px">None<svg width="4.4" height="2.6" viewBox="0 0 4.4 2.6"><polyline points="0.3,0.3 2.2,2.1 4.1,0.3" fill="none" stroke="#8a8a8a" stroke-width="0.7"/></svg></div>
<div class="sel" style="top:377.4px">None<svg width="4.4" height="2.6" viewBox="0 0 4.4 2.6"><polyline points="0.3,0.3 2.2,2.1 4.1,0.3" fill="none" stroke="#8a8a8a" stroke-width="0.7"/></svg></div>
<div class="sel" style="top:424.6px">None<svg width="4.4" height="2.6" viewBox="0 0 4.4 2.6"><polyline points="0.3,0.3 2.2,2.1 4.1,0.3" fill="none" stroke="#8a8a8a" stroke-width="0.7"/></svg></div>
</body></html>
